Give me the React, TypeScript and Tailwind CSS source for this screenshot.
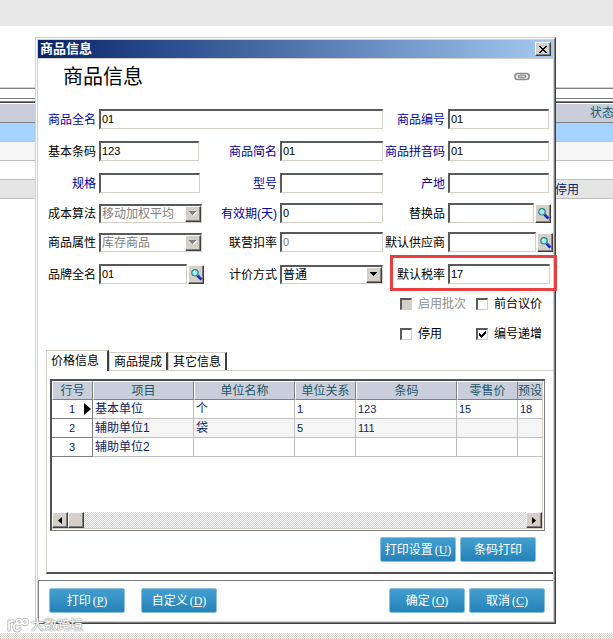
import { useState } from "react";
import type { ReactNode } from "react";

const HATCH = "bg-[conic-gradient(#d4d0c8_25%,#ffffff_0_50%,#d4d0c8_0_75%,#ffffff_0)] bg-[length:2px_2px]";
const SUNKEN = "border border-t-2 border-l-2 border-t-[#5a5a5a] border-l-[#5a5a5a] border-r-[#d4d0c8] border-b-[#d4d0c8]";
const RAISED = "border border-t-white border-l-white border-r-[#404040] border-b-[#404040] bg-[#d4d0c8] shadow-[inset_-1px_-1px_0_#808080]";

const columns = [
  { title: "行号", width: "w-[41px]" },
  { title: "项目", width: "w-[101px]" },
  { title: "单位名称", width: "w-[101px]" },
  { title: "单位关系", width: "w-[61px]" },
  { title: "条码", width: "w-[101px]" },
  { title: "零售价", width: "w-[61px]" },
  { title: "预设", width: "" },
];

const rows = [
  ["基本单位", "个", "1", "123", "15", "18"],
  ["辅助单位1", "袋", "5", "111", "", ""],
  ["辅助单位2", "", "", "", "", ""],
];

function Label({ id, children, blue }: { id: string; children: ReactNode; blue?: boolean }) {
  return (
    <label htmlFor={id} className={`pt-0.5 pr-[3px] text-right whitespace-nowrap ${blue ? "text-[#0000a8]" : "text-black"}`}>
      {children}
    </label>
  );
}

function TextField({ id, value = "", disabled }: { id: string; value?: string; disabled?: boolean }) {
  return (
    <input
      id={id}
      type="text"
      defaultValue={value}
      disabled={disabled}
      className={`h-5 w-full min-w-0 flex-1 rounded-none bg-white pb-px pl-px text-[11px] leading-4 text-black outline-none disabled:text-[#808080] ${SUNKEN}`}
    />
  );
}

function SelectField({ id, value, disabled }: { id: string; value: string; disabled?: boolean }) {
  return (
    <div className="relative flex min-w-0 flex-1">
      <select
        id={id}
        disabled={disabled}
        className={`h-[19px] w-full min-w-0 appearance-none rounded-none bg-white pl-px text-[12px] leading-4 text-black opacity-100 outline-none disabled:text-[#808080] ${SUNKEN}`}
      >
        <option>{value}</option>
      </select>
      <span className={`pointer-events-none absolute top-0.5 right-px bottom-px flex w-4 items-center justify-center ${RAISED}`}>
        <svg width="8" height="5" viewBox="0 0 8 5" shapeRendering="crispEdges">
          {disabled && <path d="M1 1h7v1h-1v1h-1v1h-1v1h-1v-1h-1v-1h-1v-1h-1z" fill="#fff" />}
          <path d="M0 0h7v1h-1v1h-1v1h-1v1h-1v-1h-1v-1h-1v-1h-1z" fill={disabled ? "#808080" : "#000"} />
        </svg>
      </span>
    </div>
  );
}

function SearchButton({ label }: { label: string }) {
  return (
    <button type="button" aria-label={label} className={`ml-px flex h-[19px] w-4 shrink-0 items-center justify-center ${RAISED}`}>
      <svg width="13" height="13" viewBox="0 0 13 13">
        <path d="M7.5 7.5l4 4" stroke="#0018c0" strokeWidth="2.6" />
        <path d="M8 7.4l3.6 3.4" stroke="#4a7cf0" strokeWidth="0.8" />
        <circle cx="5" cy="4.8" r="3.2" fill="#8ff0f0" stroke="#3c7c84" strokeWidth="1.2" />
        <path d="M3.4 4.6c.2-.9.8-1.4 1.6-1.4" stroke="#fff" fill="none" />
      </svg>
    </button>
  );
}

function FormRow({ children }: { children: ReactNode }) {
  return (
    <div className="grid h-5 grid-cols-[61px_minmax(0,105fr)_76px_minmax(0,103fr)_65px_minmax(0,105fr)] items-center">
      {children}
    </div>
  );
}

function Check({ id, label, checked, disabled, width }: { id: string; label: string; checked?: boolean; disabled?: boolean; width: string }) {
  return (
    <div className={`flex h-4 items-center ${width}`}>
      <span className="relative flex">
        <input
          id={id}
          type="checkbox"
          defaultChecked={checked}
          disabled={disabled}
          className={`peer size-3 appearance-none bg-white disabled:bg-[#d4d0c8] ${SUNKEN}`}
        />
        <svg className="pointer-events-none absolute top-[3px] left-[3px] hidden peer-checked:block" width="7" height="7" viewBox="0 0 7 7" shapeRendering="crispEdges">
          <path d="M0 2h1v1h1v1h1v-1h1v-1h1v-1h1v-1h1v3h-1v1h-1v1h-1v1h-1v1h-1v-1h-1v-1h-1z" fill="#000" />
        </svg>
      </span>
      <label htmlFor={id} className={`pl-[6px] whitespace-nowrap ${disabled ? "text-[#8c8c8c]" : ""}`}>{label}</label>
    </div>
  );
}

function BlueButton({ children, hotkey }: { children: ReactNode; hotkey?: string }) {
  return (
    <button
      type="button"
      className="h-[25px] w-[76px] rounded-[2px] border border-[#8cc0e0] bg-linear-to-b from-[#449fd0] to-[#2382b8] text-[12px] leading-4 whitespace-nowrap text-white"
    >
      {children}
      {hotkey && (
        <span className="ml-0.5 font-['Liberation_Serif',serif]">
          (<span className="underline">{hotkey}</span>)
        </span>
      )}
    </button>
  );
}

function PriceTable() {
  return (
    <table className="w-full table-fixed border-separate border-spacing-0">
      <thead>
        <tr>
          {columns.map((col, i) => (
            <th
              key={col.title}
              className={`h-[19px] border-t border-b border-t-white border-b-[#808080] bg-[#c8cfdb] p-0 leading-4 font-normal whitespace-nowrap text-[#1f5568] ${i === 6 ? "text-left" : "border-r border-l border-r-[#808080] border-l-white text-center"} ${col.width}`}
            >
              {col.title}
            </th>
          ))}
        </tr>
      </thead>
      <tbody>
        {rows.map((row, r) => (
          <tr key={r} className={r === 1 ? "bg-[#f5f5f5]" : "bg-white"}>
            <th className="relative h-[19px] border-r border-b border-[#808080] bg-white p-0 text-[11px] leading-4 font-normal">
              {r + 1}
              {r === 0 && (
                <svg className="absolute top-[3px] right-px" width="7" height="12" viewBox="0 0 7 12">
                  <path d="M0 0l7 6-7 6z" fill="#000" />
                </svg>
              )}
            </th>
            {row.map((cell, c) => (
              <td
                key={c}
                className={`h-[19px] border-b border-[#c0c0c0] p-0 pl-0.5 leading-4 whitespace-nowrap ${c > 1 ? "text-[11px]" : ""} ${c === 5 ? "" : "border-r"}`}
              >
                {cell}
              </td>
            ))}
          </tr>
        ))}
      </tbody>
    </table>
  );
}

function Backdrop() {
  return (
    <div className="flex min-h-screen flex-col bg-white">
      <div className="h-[26px] bg-[#e8e8e8]" />
      <div className="mt-[61px] h-[2px] border-t border-[#d0d0d0] bg-[#808080]" />
      <div className="mt-[9px] h-px bg-[#808080]" />
      <div className="mt-[2px] h-[2px] border-t border-[#808080] bg-[#404040]" />
      <div className="flex h-5 justify-end border-t border-b border-t-white border-b-[#808080] bg-[#c8cfdb] text-[#1f5568]">
        <span className="w-[23px] overflow-hidden leading-[18px] whitespace-nowrap">状态</span>
      </div>
      <div className="h-[19px] border-b border-[#c0c0c0] bg-[#a6d2ff]" />
      <div className="h-[19px] border-b border-[#c0c0c0] bg-[#f5f5f5]" />
      <div className="h-[19px] border-b border-[#c0c0c0]" />
      <div className="flex h-[19px] justify-end border-b border-[#c0c0c0] bg-[#e4e4e4] pr-[34px] text-[#0a246a]">
        <span className="leading-5">停用</span>
      </div>
      <div className="flex-1" />
      <div className={`h-[6px] ${HATCH}`} />
    </div>
  );
}

function Watermark() {
  return (
    <div className="absolute top-[617px] left-[7px] flex items-center gap-px text-white">
      <svg width="23" height="16" viewBox="0 0 23 16" fill="none" strokeLinecap="round">
        <g stroke="#bdbdbd" strokeWidth="3.4">
          <path d="M2 4v9M2 6c1-1.500 2-2 4-2M13 12c-2 3-6 2-6-2 0-3 2-4 4-4" />
          <circle cx="12" cy="5" r="2.500" />
          <circle cx="18" cy="5" r="2.500" />
        </g>
        <g stroke="#fff" strokeWidth="1.600">
          <path d="M2 4v9M2 6c1-1.500 2-2 4-2M13 12c-2 3-6 2-6-2 0-3 2-4 4-4" />
          <circle cx="12" cy="5" r="2.500" />
          <circle cx="18" cy="5" r="2.500" />
        </g>
      </svg>
      <span className="text-[13px] leading-4 whitespace-nowrap [text-shadow:0_0_1px_#909090,0_0_1px_#909090,0_0_2px_#a0a0a0]">大数跨境</span>
    </div>
  );
}

export default function App() {
  const [tab, setTab] = useState(0);

  return (
    <div className="relative overflow-hidden font-['Liberation_Sans','Noto_Sans_CJK_SC',sans-serif] text-[12px] leading-4">
      <Backdrop />

      <div role="dialog" aria-labelledby="dialog-title" className="absolute top-[37px] right-[57px] left-[35px] border border-t-[#d4d0c8] border-r-[#404040] border-b-[#404040] border-l-[#d4d0c8]">
        <div className="border border-t-white border-r-[#808080] border-b-[#808080] border-l-white">
          <div className="border border-[#d4d0c8] bg-white">
            <div className="flex h-[19px] items-center justify-between border-b border-[#d4d0c8] bg-linear-to-r from-[#0a246a] to-[#a6caf0] pr-0.5 pl-0.5">
              <span id="dialog-title" className="text-[13px] leading-4 font-bold text-white">商品信息</span>
              <button type="button" aria-label="关闭" className={`flex h-[14px] w-4 items-center justify-center ${RAISED}`}>
                <svg width="8" height="7" viewBox="0 0 8 7" shapeRendering="crispEdges">
                  <path d="M0 0h2v1h1v1h2v-1h1v-1h2v1h-1v1h-1v1h-1v1h1v1h1v1h1v1h-2v-1h-1v-1h-2v1h-1v1h-2v-1h1v-1h1v-1h1v-1h-1v-1h-1v-1h-1z" fill="#000" />
                </svg>
              </button>
            </div>

            <div className="flex h-[50px] items-start justify-between pt-1 pr-[23px] pl-[25px]">
              <h1 className="text-[20px] leading-7 text-black">商品信息</h1>
              <svg className="mt-[9px]" width="16" height="9" viewBox="0 0 16 9" fill="none">
                <rect x="1" y="1.500" width="14" height="6" rx="2.500" fill="#ececec" stroke="#8c8c8c" strokeWidth="1.600" />
                <path d="M7 2v1.500M9 2v1.500M7 5.500v1.500M9 5.500v1.500" stroke="#a8a8a8" />
                <path d="M4 4.500h8" stroke="#6c6c6c" strokeWidth="2.200" />
                <path d="M5 4.500h6" stroke="#e8e8e8" strokeWidth="0.800" />
              </svg>
            </div>

            <form>
              <div className="flex flex-col gap-3">
                <FormRow>
                  <Label id="full-name" blue>商品全名</Label>
                  <div className="col-span-3 flex"><TextField id="full-name" value="01" /></div>
                  <Label id="code" blue>商品编号</Label>
                  <div className="flex pr-1"><TextField id="code" value="01" /></div>
                </FormRow>
                <FormRow>
                  <Label id="barcode">基本条码</Label>
                  <div className="flex pr-[5px]"><TextField id="barcode" value="123" /></div>
                  <Label id="short-name" blue>商品简名</Label>
                  <div className="flex"><TextField id="short-name" value="01" /></div>
                  <Label id="pinyin" blue>商品拼音码</Label>
                  <div className="flex pr-1"><TextField id="pinyin" value="01" /></div>
                </FormRow>
                <FormRow>
                  <Label id="spec" blue>规格</Label>
                  <div className="flex pr-1"><TextField id="spec" /></div>
                  <Label id="model" blue>型号</Label>
                  <div className="flex"><TextField id="model" /></div>
                  <Label id="origin" blue>产地</Label>
                  <div className="flex pr-1"><TextField id="origin" /></div>
                </FormRow>
              </div>

              <div className="mt-[10px] flex flex-col gap-[9px]">
                <FormRow>
                  <Label id="cost">成本算法</Label>
                  <div className="flex pr-0.5"><SelectField id="cost" value="移动加权平均" disabled /></div>
                  <Label id="validity" blue>有效期(天)</Label>
                  <div className="flex"><TextField id="validity" value="0" /></div>
                  <Label id="substitute">替换品</Label>
                  <div className="flex items-center pr-0.5"><TextField id="substitute" /><SearchButton label="查找替换品" /></div>
                </FormRow>
                <FormRow>
                  <Label id="attribute">商品属性</Label>
                  <div className="flex pr-0.5"><SelectField id="attribute" value="库存商品" disabled /></div>
                  <Label id="discount">联营扣率</Label>
                  <div className="flex"><TextField id="discount" value="0" disabled /></div>
                  <Label id="supplier">默认供应商</Label>
                  <div className="flex items-center"><TextField id="supplier" /><SearchButton label="查找供应商" /></div>
                </FormRow>
              </div>

              <div className="mt-3">
                <FormRow>
                  <Label id="brand">品牌全名</Label>
                  <div className="flex items-center"><TextField id="brand" value="01" /><SearchButton label="查找品牌" /></div>
                  <Label id="pricing">计价方式</Label>
                  <div className="flex"><SelectField id="pricing" value="普通" /></div>
                  <Label id="tax">默认税率</Label>
                  <div className="relative flex pr-[3px]">
                    <TextField id="tax" value="17" />
                    <span className="pointer-events-none absolute -top-[9px] -right-1 -bottom-[7px] -left-[58px] border-3 border-[#ea3f3f]" />
                  </div>
                </FormRow>
              </div>

              <div className="mt-3 flex flex-col gap-[14px] pr-[11px]">
                <div className="flex justify-end">
                  <Check id="batch" label="启用批次" disabled width="w-[76px]" />
                  <Check id="bargain" label="前台议价" width="w-[66px]" />
                </div>
                <div className="flex justify-end">
                  <Check id="stopped" label="停用" width="w-[76px]" />
                  <Check id="increment" label="编号递增" checked width="w-[66px]" />
                </div>
              </div>
            </form>

            <div className="mt-2 pl-2">
              <div role="tablist" className="flex items-end">
                {["价格信息", "商品提成", "其它信息"].map((name, i) => (
                  <button
                    key={name}
                    type="button"
                    role="tab"
                    aria-selected={tab === i}
                    onClick={() => setTab(i)}
                    className={`border-t border-l border-t-[#d4d0c8] border-l-[#d4d0c8] border-r-[#404040] bg-white whitespace-nowrap ${tab === i ? "relative -mb-px h-[21px] w-[63px] border-r-2 pr-1" : "h-[18px] w-[59px] border-r-2 pt-px"}`}
                  >
                    {name}
                  </button>
                ))}
              </div>
              <div role="tabpanel" className="border-t border-b-2 border-l border-t-[#d4d0c8] border-b-[#505050] border-l-[#d4d0c8] pt-2 pb-[10px]">
                <div className="mr-2 ml-[3px] border border-t-2 border-l-2 border-t-[#505050] border-r-[#808080] border-b-[#808080] border-l-[#505050] pr-px pb-px text-[#0a246a]">
                  <div className="border-r border-b border-[#d4d0c8]">
                    <PriceTable />
                    <div className="h-[55px]" />
                    <div className={`flex justify-between ${HATCH}`}>
                      <div className="flex">
                        <button type="button" aria-label="向左滚动" className={`flex size-4 items-center justify-center ${RAISED}`}>
                          <svg width="4" height="7" viewBox="0 0 4 7"><path d="M4 0v7L0 3.500z" fill="#000" /></svg>
                        </button>
                        <span className={`size-4 ${RAISED}`} />
                      </div>
                      <button type="button" aria-label="向右滚动" className={`flex size-4 items-center justify-center ${RAISED}`}>
                        <svg width="4" height="7" viewBox="0 0 4 7"><path d="M0 0v7l4-3.500z" fill="#000" /></svg>
                      </button>
                    </div>
                  </div>
                </div>
                <div className="mt-[6px] flex justify-end gap-1 pr-[17px]">
                  <BlueButton hotkey="U">打印设置</BlueButton>
                  <BlueButton>条码打印</BlueButton>
                </div>
              </div>
            </div>

            <div className="mt-[6px] flex justify-between border-t border-l border-[#808080] pt-[7px] pr-2 pb-2 pl-[10px]">
              <div className="flex gap-4">
                <BlueButton hotkey="P">打印</BlueButton>
                <BlueButton hotkey="D">自定义</BlueButton>
              </div>
              <div className="flex gap-1">
                <BlueButton hotkey="O">确定</BlueButton>
                <BlueButton hotkey="C">取消</BlueButton>
              </div>
            </div>
          </div>
        </div>
      </div>

      <Watermark />
    </div>
  );
}
